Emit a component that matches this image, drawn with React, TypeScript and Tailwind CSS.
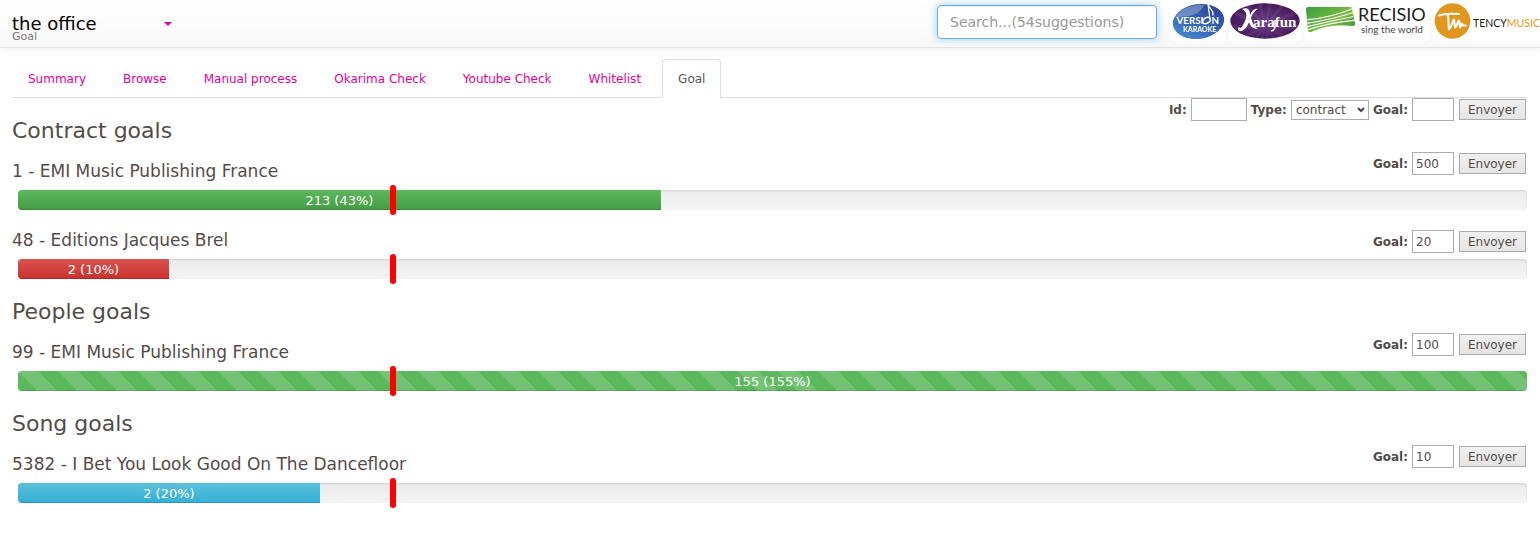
import { useId } from "react";

type Tone = "success" | "danger" | "info" | "striped";

interface Goal {
  id: number;
  name: string;
  done: number;
  goal: number;
  tone: Tone;
}

interface GoalGroup {
  title: string;
  goals: Goal[];
}

const tabs = [
  "Summary",
  "Browse",
  "Manual process",
  "Okarima Check",
  "Youtube Check",
  "Whitelist",
  "Goal",
];

const groups: GoalGroup[] = [
  {
    title: "Contract goals",
    goals: [
      { id: 1, name: "EMI Music Publishing France", done: 213, goal: 500, tone: "success" },
      { id: 48, name: "Editions Jacques Brel", done: 2, goal: 20, tone: "danger" },
    ],
  },
  {
    title: "People goals",
    goals: [{ id: 99, name: "EMI Music Publishing France", done: 155, goal: 100, tone: "striped" }],
  },
  {
    title: "Song goals",
    goals: [
      { id: 5382, name: "I Bet You Look Good On The Dancefloor", done: 2, goal: 10, tone: "info" },
    ],
  },
];

const toneClasses: Record<Tone, string> = {
  success: "bg-linear-to-b from-[#5cb85c] to-[#449d44]",
  danger: "bg-linear-to-b from-[#d9534f] to-[#c9302c]",
  info: "bg-linear-to-b from-[#5bc0de] to-[#31b0d5]",
  striped:
    "bg-[#5cb85c] bg-[linear-gradient(45deg,rgba(255,255,255,.15)_25%,transparent_25%,transparent_50%,rgba(255,255,255,.15)_50%,rgba(255,255,255,.15)_75%,transparent_75%,transparent)] bg-size-[40px_40px]",
};

// Share of the year already elapsed
const yearProgress = 24.66;

const fieldClasses = "h-[23px] border border-[#abadb3] bg-white px-[3px] text-xs text-[#544c48] outline-none";

function SubmitButton() {
  return (
    <button
      type="submit"
      className="ml-px h-[21px] w-[67px] border border-[#acacac] bg-linear-to-b from-[#f0f0f0] to-[#e5e5e5] text-xs"
    >
      Envoyer
    </button>
  );
}

function GoalField({ value }: { value: string }) {
  const id = useId();
  return (
    <>
      <label htmlFor={id} className="font-bold">
        Goal:
      </label>
      <input id={id} type="text" defaultValue={value} className={`${fieldClasses} w-[42px]`} />
    </>
  );
}

function AddGoalForm() {
  return (
    <form className="flex items-center gap-1 pr-px text-xs" onSubmit={(e) => e.preventDefault()}>
      <label htmlFor="goal-id" className="font-bold">
        Id:
      </label>
      <input id="goal-id" type="text" className={`${fieldClasses} w-14`} />
      <label htmlFor="goal-type" className="font-bold">
        Type:
      </label>
      <span className="relative flex">
        <select
          id="goal-type"
          className="h-5 w-[78px] appearance-none border border-[#abadb3] bg-white pl-1 text-xs outline-none"
        >
          <option>contract</option>
          <option>people</option>
          <option>song</option>
        </select>
        <svg
          viewBox="0 0 8 6"
          className="pointer-events-none absolute top-[7px] right-1 h-1.5 w-2"
          fill="none"
          stroke="#444"
          strokeWidth="2"
        >
          <path d="M1 1l3 3 3-3" />
        </svg>
      </span>
      <GoalField value="" />
      <SubmitButton />
    </form>
  );
}

function GoalRow({ goal, compact }: { goal: Goal; compact: boolean }) {
  const percent = Math.round((goal.done / goal.goal) * 100);
  const filled = Math.min((goal.done / goal.goal) * 100, 100);
  return (
    <article>
      <div className={`flex justify-between ${compact ? "h-[29px]" : "h-[38px]"}`}>
        <h3 className="self-end pb-[9px] text-[17px] leading-5">
          {goal.id} - {goal.name}
        </h3>
        <form
          className="flex items-center gap-1 self-start pr-px text-xs"
          onSubmit={(e) => e.preventDefault()}
        >
          <GoalField value={String(goal.goal)} />
          <SubmitButton />
        </form>
      </div>
      <div className="relative ml-1.5">
        <div className="h-5 overflow-hidden rounded bg-linear-to-b from-[#ebebeb] to-[#f5f5f5] shadow-[inset_0_1px_2px_rgba(0,0,0,.1)]">
          <div
            className={`h-full text-center text-[13px] leading-[21px] text-white shadow-[inset_0_-1px_0_rgba(0,0,0,.15)] ${toneClasses[goal.tone]}`}
            style={{ width: `${filled}%` }}
          >
            {goal.done} ({percent}%)
          </div>
        </div>
        <div
          className="absolute -top-[5px] -bottom-[5px] w-1.5 rounded-[3px] bg-[#f00]"
          style={{ left: `${yearProgress}%` }}
        />
      </div>
    </article>
  );
}

function VersionKaraokeLogo() {
  return (
    <svg viewBox="0 0 53 38" className="h-[38px] w-[53px] shrink-0" role="img" aria-label="Version Karaoke">
      <defs>
        <linearGradient id="vk" x1="0" y1="1" x2="1" y2="0">
          <stop offset="0" stopColor="#4a94d6" />
          <stop offset="0.5" stopColor="#3562b0" />
          <stop offset="1" stopColor="#2a3c94" />
        </linearGradient>
      </defs>
      <rect width="53" height="38" fill="#fff" />
      <ellipse cx="26.5" cy="18.5" rx="25.8" ry="17.3" fill="url(#vk)" transform="rotate(-8 26.5 18.5)" />
      <path d="M3 15C8 6 20 1 32 2c-2 6-8 10-16 11-5 1-10 1-13 2z" fill="#fff" opacity=".28" />
      <g fill="#fff" fontFamily="Lato, sans-serif" fontWeight="700">
        <text x="4.5" y="20.5" fontSize="9.8">
          VERSI
        </text>
        <text x="39.5" y="20.5" fontSize="9.8">
          N
        </text>
        <text x="11" y="28.5" fontSize="7">
          KARAOKE
        </text>
      </g>
      <g fill="none" stroke="#fff">
        <ellipse cx="34.5" cy="17.5" rx="4" ry="2.8" strokeWidth="1.5" transform="rotate(-30 34.5 17.5)" />
        <path d="M38 16L36 1.500c1 4 6 5 5 11" strokeWidth="1.2" />
      </g>
    </svg>
  );
}

function KarafunLogo() {
  const rays = Array.from({ length: 14 }, (_, i) => (i * 360) / 14);
  return (
    <svg viewBox="0 0 72 38" className="h-[38px] w-[72px] shrink-0" role="img" aria-label="Karafun">
      <defs>
        <radialGradient id="kf">
          <stop offset="0" stopColor="#6b408c" />
          <stop offset="1" stopColor="#451659" />
        </radialGradient>
        <clipPath id="kf-oval">
          <ellipse cx="36" cy="18" rx="34.7" ry="17.7" />
        </clipPath>
      </defs>
      <rect width="72" height="38" fill="#fff" />
      <g clipPath="url(#kf-oval)">
        <rect width="72" height="38" fill="url(#kf)" />
        {rays.map((angle) => (
          <path key={angle} d="M36 24l40-3v6z" fill="#fff" opacity=".07" transform={`rotate(${angle} 36 24)`} />
        ))}
      </g>
      <path
        d="M13 6c6-2 8 1 8 6 2-4 5-7 8-6-4 2-6 6-7 9 1 5 4 9 7 11-5 0-8-3-9-7-2 5-4 8-8 9-3 1-4-2-2-4 1 2 3 1 4-2 3-5 4-9 3-12-1-2-2-3-4-4z"
        fill="#fff"
      />
      <text x="24" y="23.5" fill="#fff" fontFamily="'Liberation Serif', serif" fontWeight="700" fontSize="15">
        arafun
      </text>
      <path d="M46 17c0 6 1 10-4 11" stroke="#fff" strokeWidth="1.5" fill="none" />
    </svg>
  );
}

function RecisioLogo() {
  return (
    <svg viewBox="0 0 124 38" className="h-[38px] w-[124px] shrink-0" role="img" aria-label="Recisio, sing the world">
      <defs>
        <linearGradient id="rc" x1="0" y1="0" x2="1" y2="1">
          <stop offset="0" stopColor="#2c9c41" />
          <stop offset=".55" stopColor="#79bb3d" />
          <stop offset="1" stopColor="#18833c" />
        </linearGradient>
        <clipPath id="rc-flag">
          <path d="M3 4h42q2 0 2 2l3 14q1 3-3 3-22-3-41 6-3 1-3-2L1 7q0-3 2-3z" />
        </clipPath>
      </defs>
      <rect width="124" height="38" fill="#fff" />
      <g clipPath="url(#rc-flag)">
        <rect width="52" height="34" fill="url(#rc)" />
        <g fill="none" stroke="#fff" strokeWidth="1.2">
          <path d="M0 17Q26 15 49 5" />
          <path d="M0 20.500Q26 17 50 9" />
          <path d="M0 24Q26 18 51 13" />
          <path d="M0 27.500Q26 19 52 17" />
        </g>
      </g>
      <text x="53" y="17.5" fill="#1d1d1b" fontFamily="Lato, sans-serif" fontSize="18">
        RECISIO
      </text>
      <text x="56" y="30" fill="#484848" fontFamily="Lato, sans-serif" fontSize="10">
        sing the world
      </text>
    </svg>
  );
}

function TencyMusicLogo() {
  return (
    <svg viewBox="0 0 107 38" className="h-[38px] w-[107px] shrink-0" role="img" aria-label="Tency Music">
      <rect width="107" height="38" fill="#fff" />
      <circle cx="19.5" cy="18" r="17.8" fill="#df981d" />
      <path
        d="M6 12.500c5-2 12-2 20-1.500M15 12.500c1 4 0 9 1 14 3-3 3-8 5-10 1 2 0 6 1 8 2-1 2-5 4-7 1 2 0 4 1 7 1-1 1-3 2-4l1 2h3"
        fill="none"
        stroke="#fff"
        strokeWidth="2"
        strokeLinejoin="round"
        strokeLinecap="round"
      />
      <text x="40" y="23.5" fontFamily="Lato, sans-serif" fontSize="10.5">
        <tspan fill="#1d1d1b">TENCY</tspan>
        <tspan fill="#df981d">MUSIC</tspan>
      </text>
    </svg>
  );
}

export default function App() {
  return (
    <div className="min-h-screen bg-white font-['DejaVu_Sans',Verdana,sans-serif] text-[#544c48]">
      <header className="flex h-12 justify-between border-b border-[#e3e3e3] bg-linear-to-b from-white to-[#f8f8f8] pl-3 shadow-[0_1px_8px_rgba(0,0,0,.08)]">
        <div className="flex w-40 items-start justify-between pt-4">
          <div>
            <div className="text-lg leading-4 text-black">the office</div>
            <div className="text-[11px] leading-[10px] text-[#777]">Goal</div>
          </div>
          <button type="button" aria-label="Switch office" className="pt-1.5">
            <svg viewBox="0 0 8 4" className="h-1 w-2" fill="#e2009a">
              <path d="M0 0h8L4 4z" />
            </svg>
          </button>
        </div>
        <div className="flex items-start gap-[15px] overflow-hidden pt-[3px] pl-4">
          <input
            type="search"
            aria-label="Search"
            placeholder="Search...(54suggestions)"
            className="mt-0.5 h-[34px] w-[220px] rounded border border-[#66afe9] bg-white px-3 text-sm outline-none shadow-[inset_0_1px_1px_rgba(0,0,0,.075),0_0_8px_rgba(102,175,233,.6)] placeholder:text-[#999]"
          />
          <div className="flex gap-1">
            <VersionKaraokeLogo />
            <KarafunLogo />
            <RecisioLogo />
            <TencyMusicLogo />
          </div>
        </div>
      </header>

      <main className="pt-[11px] pr-[13px] pl-3">
        <nav className="flex gap-[5px] border-b border-[#ddd] text-xs">
          {tabs.map((tab) => (
            <a
              key={tab}
              href="#"
              aria-current={tab === "Goal" ? "page" : undefined}
              className={
                tab === "Goal"
                  ? "-mb-px h-[39px] rounded-t border border-b-0 border-[#ddd] bg-white px-[15px] leading-[38px] text-[#555]"
                  : "h-[38px] border border-transparent px-[15px] leading-[38px] text-[#e2009a]"
              }
            >
              {tab}
            </a>
          ))}
        </nav>

        {groups.map((group, groupIndex) => (
          <section key={group.title}>
            <div className="flex items-start justify-between">
              <h2 className="pt-5 pb-2 text-[22px] leading-[26px]">{group.title}</h2>
              {groupIndex === 0 && <AddGoalForm />}
            </div>
            <div className="flex flex-col gap-5">
              {group.goals.map((goal, index) => (
                <GoalRow key={goal.id} goal={goal} compact={index > 0} />
              ))}
            </div>
          </section>
        ))}
      </main>
    </div>
  );
}
